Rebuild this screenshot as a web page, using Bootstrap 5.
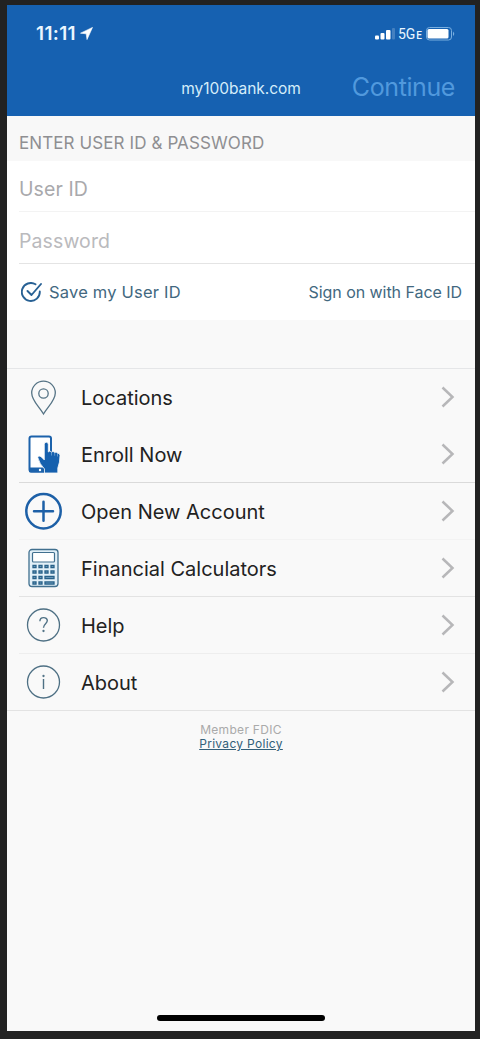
<!DOCTYPE html>
<html lang="en">
<head>
<meta charset="utf-8">
<meta name="viewport" content="width=device-width, initial-scale=1">
<title>my100bank.com</title>
<link href="https://cdn.jsdelivr.net/npm/bootstrap@5.3.0/dist/css/bootstrap.min.css" rel="stylesheet">
<style>
body{background:#222;font-family:Inter,"Liberation Sans",sans-serif;color:#222;line-height:1}
.phone{height:1039px;padding:5px 5px 8px 7px}
.screen{background:#f9f9f9}
.top-bar{background:#1661b1;height:111px;color:#eaf6ff}
.status{height:57px;padding:0 20px 0 29px}
.clock{font-size:19px;font-weight:600;letter-spacing:.35px}
.net{font-family:Roboto,sans-serif;font-size:14px;font-weight:400;margin-left:2px}
.net span{font-size:10px;font-weight:500;margin-left:1px}
.title-row{height:50px;padding:0 20px;display:grid;grid-template-columns:1fr auto 1fr}
.site{font-size:15.5px;color:#d5edfa;padding-top:4px;letter-spacing:-.05px}
.go{font-size:25px;color:#5199dd;letter-spacing:-.4px;padding-top:1px}
.sect{height:45px;padding:9px 12px 0;font-size:17px;letter-spacing:.1px;color:#8f8f92;background:#f8f8f8}
.field{height:51px;padding-top:8px;margin-left:12px;font-size:19.5px;letter-spacing:.1px;color:#a9a9ac;border-bottom:1px solid #f3f3f3}
.field.pw{height:52px;color:#bababd;border-color:#e4e4e4}
.opts{height:56px;padding:0 13px 0 14px;font-size:16px;color:#426880}
.save{font-size:16.5px;letter-spacing:.2px;gap:7px}
.face{letter-spacing:-.05px}
.gap-band{height:49px;border-bottom:1px solid #e5e6e8}
.item{height:57px;padding:0 20px 1px 0;font-size:20px;color:#222}
.item .ico{width:74px;padding-left:17px}
.item .label{padding-top:2px}
.item .ico svg{display:block}
.item:after{content:"";position:absolute;left:12px;right:0;bottom:0;height:1px;background:var(--line,transparent)}
.item:last-child:after{left:0}
.foot{font-size:12px;line-height:14px;letter-spacing:.3px;padding-top:12px;color:#aaa}
.foot a{color:#335f79}
.home{width:168px;height:6px;border-radius:3px;background:#000;margin-bottom:10px}
</style>
</head>
<body>
<div class="phone">
<main class="screen h-100 d-flex flex-column">
  <header class="top-bar">
    <div class="status d-flex align-items-center justify-content-between">
      <div class="clock d-flex align-items-center"><span>11:11</span>
        <svg class="ms-1" width="13" height="13" viewBox="0 0 13 13"><path d="M.5 6.2 12.5.4 7 12.6 6.2 6.8z" fill="#fff" stroke="#fff" stroke-width=".6" stroke-linejoin="round"/></svg></div>
      <div class="d-flex align-items-center">
        <svg width="21" height="13" viewBox="0 0 21 13" fill="#fff"><rect x="0" y="8.500" width="4" height="4" rx="1"/><rect x="5.500" y="6" width="4" height="6.500" rx="1"/><rect x="11" y="3" width="4.500" height="9.500" rx="1"/><rect x="17" y="1" width="3" height="11.500" rx="1" opacity=".2"/></svg>
        <span class="net">5G<span>E</span></span>
        <svg class="ms-1" width="29" height="14" viewBox="0 0 29 14"><rect x=".5" y=".5" width="25" height="12.500" rx="3" fill="none" stroke="#79afe0"/><rect x="1.500" y="2" width="21" height="9.500" rx="1.500" fill="#fff"/><path d="M27 4.500q2.500 2.300 0 4.600z" fill="#79afe0"/></svg>
      </div>
    </div>
    <div class="title-row align-items-center"><span></span><span class="site">my100bank.com</span><span class="go text-end">Continue</span></div>
  </header>
  <div class="sect d-flex align-items-center"><span>ENTER USER ID &amp; PASSWORD</span></div>
  <section class="bg-white">
    <div class="field d-flex align-items-center"><span>User ID</span></div>
    <div class="field pw d-flex align-items-center"><span>Password</span></div>
    <div class="opts d-flex align-items-center justify-content-between">
      <div class="save d-flex align-items-center"><svg width="21" height="21" viewBox="0 0 21 21" fill="none" stroke="#286194" stroke-width="1.900" stroke-linecap="round" stroke-linejoin="round"><path d="M14.500 2.300A9 9 0 1 0 18.800 9.500M6.500 9l4 4L20 2"/></svg><span>Save my User ID</span></div>
      <span class="face">Sign on with Face ID</span>
    </div>
  </section>
  <div class="gap-band"></div>
  <nav>
    <div class="item position-relative d-flex align-items-center"><div class="ico"><svg width="40" height="40" viewBox="0 0 40 40" fill="none" stroke="#557385" stroke-width="1.300"><path d="M19.500 37C15 29.500 7.700 23.500 7.700 16a11.800 11.800 0 0 1 23.600 0C31.300 23.500 24 29.500 19.500 37z"/><circle cx="19.500" cy="16.500" r="4.700"/></svg></div><span class="label">Locations</span></div>
    <div class="item position-relative d-flex align-items-center" style="--line:#dadada"><div class="ico"><svg width="40" height="40" viewBox="0 0 40 40"><rect x="5.500" y="2.500" width="21.500" height="35" rx="2" fill="#fff" stroke="#1c62ab" stroke-width="2"/><path d="M5 33.500h22V37q0 1.500-1.500 1.500H6.500Q5 38.500 5 37z" fill="#1c62ab"/><circle cx="16" cy="36" r="1.200" fill="#fff"/><path d="M20.300 10.500q0-2.300 2-2.300t2 2.300V18q1.600-2 3.200 0 1.700-1.500 3.200.6 1.500-1.200 2.800.6 2.300-.3 2.500 2.300 0 7-2.200 12.500v5H20.500V35q-5-5-6.700-11.500.7-2.500 3.500-.6l3 3z" fill="#1560ae" stroke="#f9f9f9" stroke-width=".8"/><path d="M27.500 18v3.500M30.700 18.700v3M33.500 19.500v3" stroke="#d9e9f6" stroke-width=".4"/></svg></div><span class="label">Enroll Now</span></div>
    <div class="item position-relative d-flex align-items-center" style="--line:#f3f3f3"><div class="ico"><svg width="40" height="40" viewBox="0 0 40 40" fill="none" stroke="#1d60a7" stroke-width="2.500"><circle cx="19.500" cy="20.300" r="17.200"/><path d="M19.500 10.800v19M10 20.300h19" stroke-linecap="round"/></svg></div><span class="label">Open New Account</span></div>
    <div class="item position-relative d-flex align-items-center" style="--line:#e3e3e3"><div class="ico"><svg width="40" height="40" viewBox="0 0 40 40"><rect x="5" y="1.500" width="29" height="37" rx="3" fill="#e2f0f8" stroke="#41708f" stroke-width="1.300"/><rect x="8.500" y="4.500" width="22" height="9.500" rx="1" fill="#fff" stroke="#41708f" stroke-width="1.200"/><g fill="#a6cbe2" stroke="#286189" stroke-width="1.300"><path d="M9 17.500h3v2H9zM15 17.500h3v2h-3zM21 17.500h3v2h-3zM27 17.500h3v2h-3zM9 23h3v2H9zM15 23h3v2h-3zM21 23h3v2h-3zM27 23h3v2h-3zM9 28.500h3v2H9zM15 28.500h3v2h-3zM9 34h3v2H9zM15 34h3v2h-3zM21 28.500h9v2h-9zM21 34h9v2h-9z"/></g></svg></div><span class="label">Financial Calculators</span></div>
    <div class="item position-relative d-flex align-items-center" style="--line:#eeeeee"><div class="ico"><svg width="40" height="40" viewBox="0 0 40 40" fill="none" stroke="#4e7084" stroke-width="1.300"><circle cx="19.500" cy="20" r="16"/><path d="M15.900 16.200c0-4.900 7.400-4.500 7.400-.6 0 3.200-3.800 3-3.800 7.200" stroke-width="1.400"/><circle cx="19.500" cy="26" r=".5"/></svg></div><span class="label">Help</span></div>
    <div class="item position-relative d-flex align-items-center" style="--line:#e3e3e3"><div class="ico"><svg width="40" height="40" viewBox="0 0 40 40" fill="none" stroke="#4e7084" stroke-width="1.300"><circle cx="19.500" cy="20" r="16"/><path d="M19.500 17v10" stroke-width="1.400"/><circle cx="19.500" cy="14" r=".5"/></svg></div><span class="label">About</span></div>
  </nav>
  <footer class="foot text-center"><div>Member FDIC</div><a href="#">Privacy Policy</a></footer>
  <div class="home mt-auto mx-auto"></div>
</main>
</div>
<script src="https://cdn.jsdelivr.net/npm/bootstrap@5.3.0/dist/js/bootstrap.bundle.min.js"></script>
<script>
document.querySelectorAll('.item').forEach(function (row) {
  row.insertAdjacentHTML('beforeend', '<svg class="ms-auto" width="14" height="22" viewBox="0 0 14 22" fill="none" stroke="#b7b7b9" stroke-width="2.500"><path d="M1.500 1.500 11.500 11 1.500 20.500"/></svg>');
});
</script>
</body>
</html>
